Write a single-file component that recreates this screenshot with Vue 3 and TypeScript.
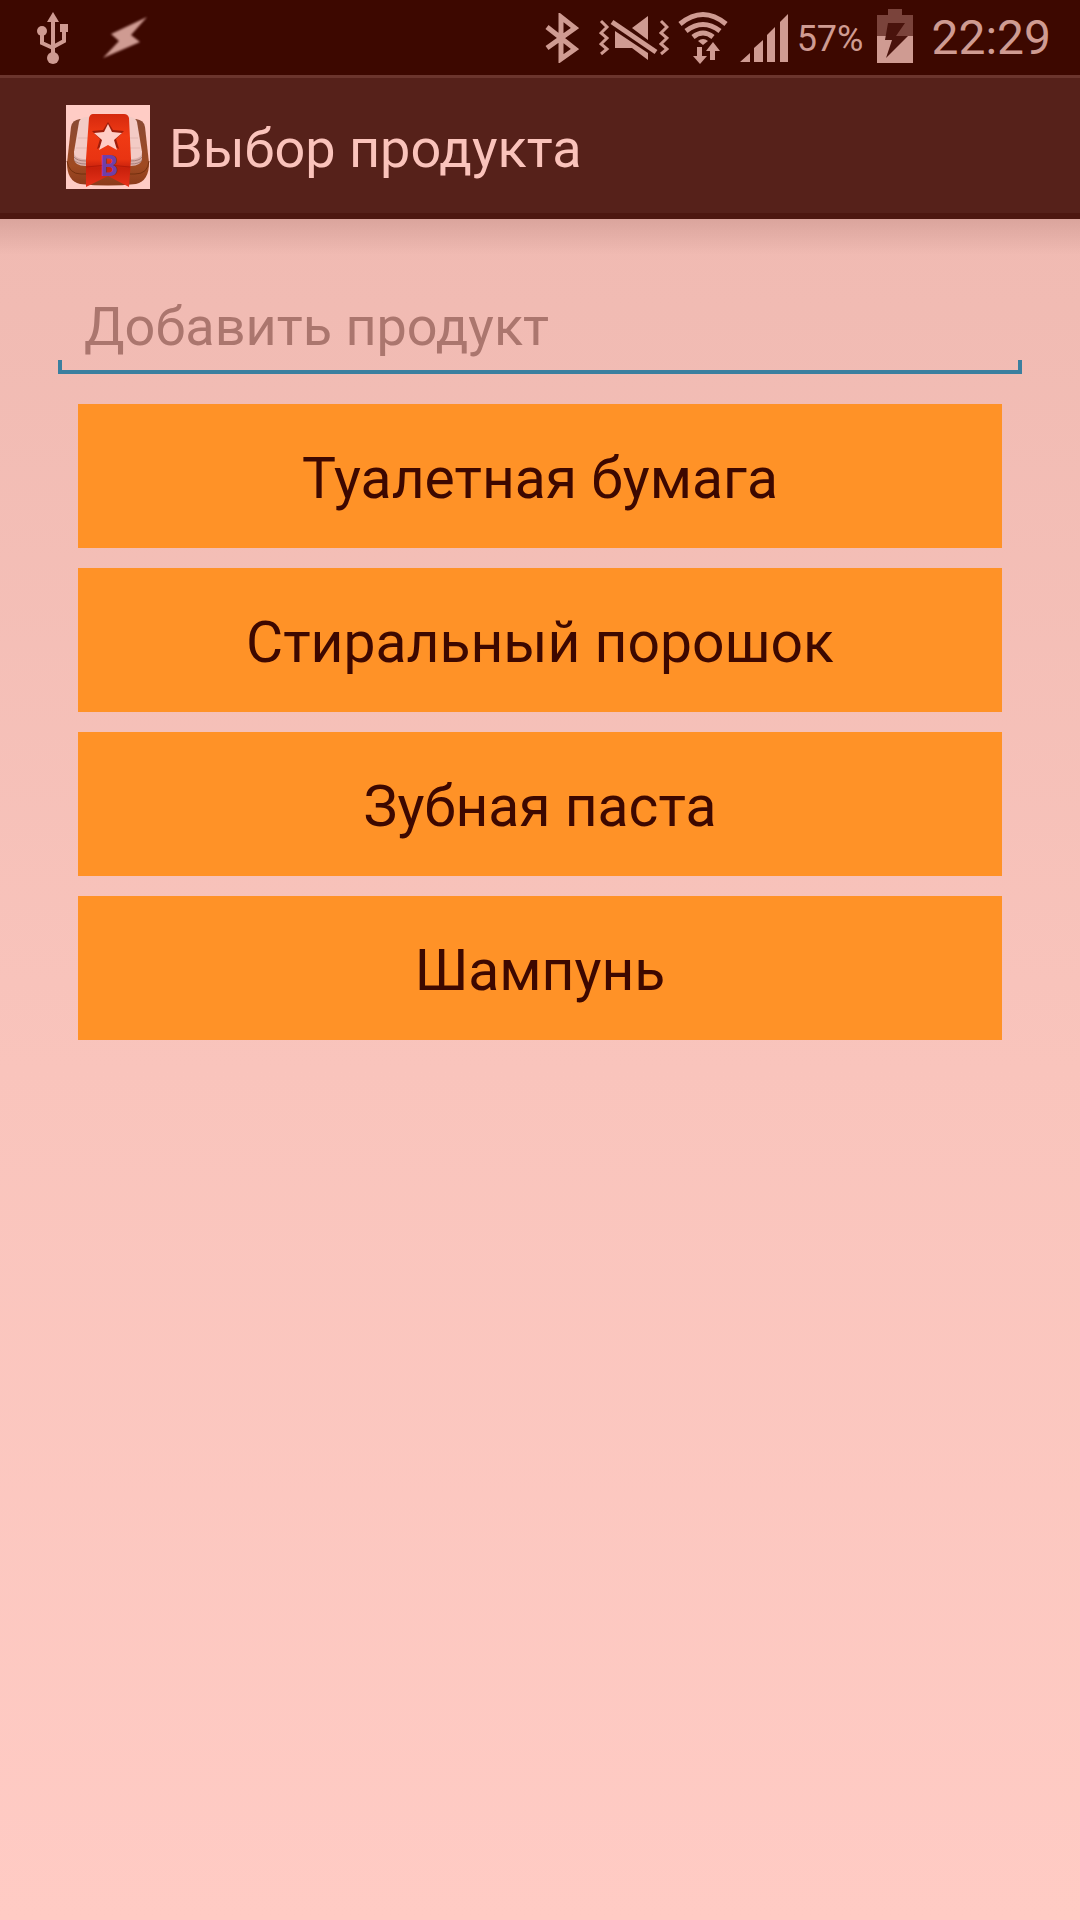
<script setup lang="ts">
import { ref } from 'vue'

const query = ref('')
const products = ['Туалетная бумага', 'Стиральный порошок', 'Зубная паста', 'Шампунь']
</script>

<template>
  <div class="screen">
    <header class="status">
      <div class="group">
        <svg class="usb" width="32" height="52" viewBox="0 0 32 52" aria-hidden="true">
          <path d="M16 0l6 10h-12z" fill="currentColor" />
          <path d="M16 8v38M5 19v12l11 5M27 18v11l-11 6" fill="none" stroke="currentColor" stroke-width="4" />
          <circle cx="5" cy="19" r="5" fill="currentColor" />
          <rect x="23" y="12" width="8" height="8" fill="currentColor" />
          <circle cx="16" cy="46" r="6" fill="currentColor" />
        </svg>
        <svg class="bolt" width="48" height="44" viewBox="0 0 48 44" aria-hidden="true">
          <path d="M46 1L10 18l8 7L2 42l37-16-9-7z" fill="currentColor" />
        </svg>
      </div>
      <div class="group">
        <svg class="bt" width="34" height="50" viewBox="0 0 34 50" aria-hidden="true">
          <path d="M2 14l28 22-14 10V4l14 11L2 35" fill="none" stroke="currentColor" stroke-width="5" />
        </svg>
        <svg class="mute" width="70" height="46" viewBox="0 0 70 46" aria-hidden="true">
          <path d="M2 6l6 6-6 6 6 5-6 6 6 5-6 5M62 6l6 6-6 6 6 5-6 6 6 5-6 5" fill="none" stroke="currentColor" stroke-width="3" />
          <path d="M49 1v24L33 13zM16 16v17h17l16 12v-7z" fill="currentColor" />
          <path d="M13 7l44 30" stroke="currentColor" stroke-width="5" />
        </svg>
        <svg class="wifi" width="50" height="54" viewBox="0 0 50 54" aria-hidden="true">
          <path d="M2 13q23-19 46 0M8 20q17-13 34 0M15 26q10-8 20 0" fill="none" stroke="currentColor" stroke-width="5" />
          <path d="M20 30q5-4 10 0l-5 4z" fill="currentColor" />
          <path d="M19 36h5v9h5l-7 8-7-8h4zM32 49h5v-9h5l-7-9-7 9h4z" fill="currentColor" />
        </svg>
        <svg class="signal" width="48" height="48" viewBox="0 0 48 48" aria-hidden="true">
          <path d="M0 48l10-9v9zM14 34l9-8v22h-9zM27 21l8-8v35h-8zM40 8l8-8v48h-8z" fill="currentColor" />
        </svg>
        <span class="percent">57%</span>
        <svg class="battery" width="36" height="54" viewBox="0 0 36 54" aria-hidden="true">
          <path d="M11 0h14v6h11v21H0V6h11z" fill="#7a433b" />
          <path d="M0 27h36v27H0z" fill="#cf9b92" />
          <path d="M11 14h17l-9 13h12L9 49l6-18H8z" fill="#49130c" />
        </svg>
        <time class="clock">22:29</time>
      </div>
    </header>

    <div class="bar">
      <svg class="logo" width="84" height="84" viewBox="0 0 84 84" aria-hidden="true">
        <defs>
          <linearGradient id="wood" x1="0" y1="0" x2="0" y2="1">
            <stop offset="0" stop-color="#8a4a33" />
            <stop offset="0.7" stop-color="#a04a22" />
            <stop offset="1" stop-color="#8b3b1b" />
          </linearGradient>
          <linearGradient id="ribbon" x1="0" y1="0" x2="0" y2="1">
            <stop offset="0" stop-color="#d5290e" />
            <stop offset="0.3" stop-color="#f03a14" />
            <stop offset="0.62" stop-color="#e93412" />
            <stop offset="0.74" stop-color="#c8200b" />
            <stop offset="1" stop-color="#e8321a" />
          </linearGradient>
        </defs>
        <rect width="84" height="84" fill="#ffccc5" />
        <path d="M14 14h56q8 1 9 8l4 36q0 18-13 21-28 3-56 0Q1 76 1 58L5 22q1-7 9-8z" fill="url(#wood)" />
        <path d="M1 56q2 13 14 13h54q13 0 14-13" fill="none" stroke="#75300f" stroke-width="1" />
        <path d="M8 46v8q1 7 11 7h46q10 0 11-7v-8z" fill="#d9afa9" />
        <path d="M8 52q3 4 12 4h44q10 0 12-4M8 55q3 4 12 4h44q10 0 12-4" fill="none" stroke="#a97f79" stroke-width="1" />
        <path d="M19 12h46q5 1 6 5l5 30q0 6-9 7H17q-9-1-9-7l5-30q1-4 6-5z" fill="#f3cbc5" />
        <path d="M12 33h10M62 33h10M10 43h12M62 43h12" stroke="#e3b7b1" stroke-width="1" />
        <path d="M27 9h31q4 0 5 4l2 41-2 28-21-11-22 11 0-28 3-41q1-4 4-4z" fill="url(#ribbon)" />
        <path d="M20 62l22-2 22 2" fill="none" stroke="#b31908" stroke-width="1" />
        <path d="M42 17l5 8 11 1-8 8 3 10-11-6-11 6 3-10-8-8 11-1z" fill="#9e1d0b" />
        <path d="M42 19l4 8 10 1-8 7 3 10-9-5-9 5 3-10-8-7 10-1z" fill="#ffccc5" />
        <text x="43" y="71" text-anchor="middle" class="letter">B</text>
      </svg>
      <h1 class="title">Выбор продукта</h1>
    </div>

    <main class="content">
      <div class="field">
        <input v-model="query" class="input" type="text" placeholder="Добавить продукт" aria-label="Добавить продукт" />
      </div>
      <div class="list">
        <button v-for="p in products" :key="p" type="button" class="item">{{ p }}</button>
      </div>
    </main>
  </div>
</template>

<style>
body {
  margin: 0;
  background: #ffcac2;
}
</style>

<style scoped>
.screen {
  min-height: 100vh;
  display: flex;
  flex-direction: column;
  font-family: Roboto, 'Noto Sans', sans-serif;
}
.status {
  height: 75px;
  box-sizing: border-box;
  padding: 0 29px 0 37px;
  display: flex;
  justify-content: space-between;
  background: #3d0800;
  color: #cf9b92;
}
.group {
  display: flex;
  align-items: center;
}
.bolt {
  margin-left: 32px;
  filter: blur(1px);
}
.mute {
  margin-left: 20px;
}
.wifi {
  margin-left: 9px;
}
.signal {
  margin-left: 12px;
}
.percent {
  margin-left: 9px;
  padding-top: 2px;
  font-size: 36px;
  line-height: 40px;
}
.battery {
  margin-left: 14px;
  margin-bottom: 3px;
}
.clock {
  margin-left: 18px;
  font-size: 48px;
  line-height: 56px;
}
.bar {
  height: 144px;
  box-sizing: border-box;
  padding: 2px 0 0 66px;
  display: flex;
  align-items: center;
  gap: 19px;
  border-top: 3px solid #6b352d;
  border-bottom: 6px solid #4d1710;
  background: #56211a;
}
.logo {
  flex: none;
}
.letter {
  font-family: 'Noto Sans', sans-serif;
  font-size: 28px;
  font-weight: 700;
  fill: #6f3fa8;
}
.title {
  margin: 0;
  padding-top: 4px;
  font-size: 54px;
  line-height: 64px;
  font-weight: 400;
  color: #fac3bb;
}
.content {
  flex: 1;
  padding: 65px 58px 0;
  background:
    linear-gradient(rgba(61, 8, 0, 0.12), rgba(61, 8, 0, 0) 36px),
    linear-gradient(#f0bab2, #f9c4bc 50%, #ffcbc4);
}
.field {
  position: relative;
  height: 86px;
  border-bottom: 4px solid #3b7f9f;
}
.field::before,
.field::after {
  content: '';
  position: absolute;
  bottom: 0;
  width: 4px;
  height: 10px;
  background: #3b7f9f;
}
.field::before {
  left: 0;
}
.field::after {
  right: 0;
}
.input {
  width: 100%;
  height: 84px;
  box-sizing: border-box;
  padding: 0 26px;
  border: 0;
  outline: 0;
  background: transparent;
  font: inherit;
  font-size: 54px;
  color: #3d0800;
}
.input::placeholder {
  color: #ab766e;
  opacity: 1;
}
.list {
  display: flex;
  flex-direction: column;
  gap: 20px;
  padding: 30px 20px;
}
.item {
  min-height: 144px;
  padding: 6px 0 0;
  border: 0;
  background: #ff9227;
  color: #3d0800;
  font: inherit;
  font-size: 57px;
  line-height: 68px;
}
</style>
